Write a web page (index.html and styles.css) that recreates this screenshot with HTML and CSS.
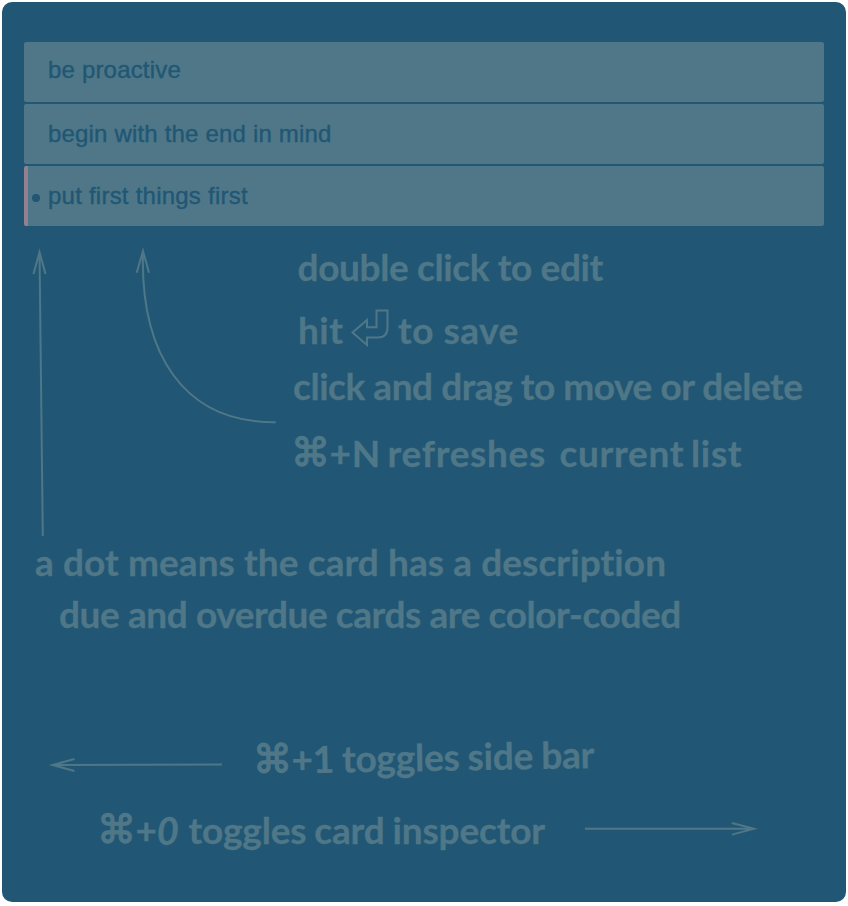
FILE: index.html
```html
<!DOCTYPE html>
<html lang="en">
<head>
<meta charset="utf-8">
<title>Card list help</title>
<link rel="stylesheet" href="styles.css">
</head>
<body>
<main class="panel">
  <ul class="cards">
    <li class="card card-first">be proactive</li>
    <li class="card">begin with the end in mind</li>
    <li class="card card-overdue"><span class="dot"></span>put first things first</li>
  </ul>
  <section class="hints">
    <p class="hint edit">double click to edit</p>
    <p class="hint save"><span>hit</span><svg class="return" viewBox="0 0 38 38"><path d="M1.5 23.5 16 11V18.300H25.500V1.500H36.500V18.500Q36.500 28.500 27 28.500H16V36Z"/></svg><span>to save</span></p>
    <p class="hint drag">click and drag to move or delete</p>
    <p class="hint refresh"><span class="cmd">⌘</span>+N refreshes&nbsp; current list</p>
    <p class="hint desc">a dot means the card has a description</p>
    <p class="hint due">due and overdue cards are color-coded</p>
    <p class="hint side"><span class="cmd">⌘</span>+1 toggles side bar</p>
    <p class="hint inspector"><span class="cmd">⌘</span>+<i class="zero">0</i> toggles card inspector</p>
  </section>
  <svg class="arrows" viewBox="0 0 844 900">
    <path d="M40.800 534 37.500 250M31.500 272 37.500 250 43.500 272"/>
    <path d="M273.800 420.300C180 421 138 350 141 249M134.700 270.800 141 249 147 270.800"/>
    <path d="M220 762.500 50.500 763M72.500 757 50.500 763 72.500 769"/>
    <path d="M583 826.800H752M730 821 752 826.800 730 832.600"/>
  </svg>
</main>
</body>
</html>
```
FILE: styles.css
```css
body { margin: 0; background: #fff; }
.panel {
  position: relative;
  box-sizing: border-box;
  width: 844px;
  height: 900px;
  margin: 2px;
  padding: 40px 22px 0;
  border-radius: 10px;
  background: #215774;
  overflow: hidden;
}
.cards {
  display: flex;
  flex-direction: column;
  gap: 2px;
  margin: 0;
  padding: 0;
  list-style: none;
}
.card {
  position: relative;
  box-sizing: border-box;
  height: 60px;
  padding-left: 24px;
  border-radius: 2px;
  overflow: hidden;
  background: #4f7788;
  color: #215774;
  font: 24px/60px "Liberation Sans", Arial, sans-serif;
  letter-spacing: 0.18px;
  -webkit-text-stroke: 0.4px #215774;
}
.card-first { line-height: 56px; }
.card-overdue { border-left: 4px solid #95808f; padding-left: 20px; letter-spacing: 0.23px; }
.dot {
  position: absolute;
  left: 4px;
  top: 28px;
  width: 8px;
  height: 8px;
  border-radius: 50%;
  background: #215774;
}
.hints {
  display: flex;
  flex-direction: column;
  align-items: flex-start;
  padding-top: 21px;
}
.hint {
  display: flex;
  margin: 0;
  color: #4f7788;
  font: 700 37px/40px Lato, "Open Sans", sans-serif;
  font-variant-ligatures: none;
  white-space: pre;
  -webkit-text-stroke: 0.3px #4f7788;
}
.edit { margin-left: 273.500px; letter-spacing: -0.37px; }
.save { margin: 23px 0 0 274px; letter-spacing: 0.5px; }
.drag { margin: 16px 0 0 269px; letter-spacing: -0.45px; }
.refresh { margin: 27px 0 0 267px; letter-spacing: 0.7px; word-spacing: -3px; }
.desc { margin: 69px 0 0 11px; letter-spacing: 0.08px; }
.due { margin: 12px 0 0 35px; letter-spacing: -0.42px; }
.side { margin: 103px 0 0 229px; letter-spacing: -0.2px; word-spacing: -0.8px; transform: rotate(-1deg); }
.inspector { margin: 33px 0 0 73px; letter-spacing: -0.15px; word-spacing: -1px; }
.zero { font-size: 38px; padding-right: 2px; }
.cmd {
  width: 38.500px;
  font: 400 39px/40px "DejaVu Sans", sans-serif;
  letter-spacing: 0;
  -webkit-text-stroke: 1.3px #4f7788;
}
.return {
  width: 38px;
  height: 38px;
  margin: -1px 9px 0 7.500px;
  fill: none;
  stroke: #4f7788;
  stroke-width: 2;
}
.arrows {
  position: absolute;
  inset: 0;
  width: 844px;
  height: 900px;
  fill: none;
  stroke: #4f7788;
  stroke-width: 2;
  pointer-events: none;
}
```
